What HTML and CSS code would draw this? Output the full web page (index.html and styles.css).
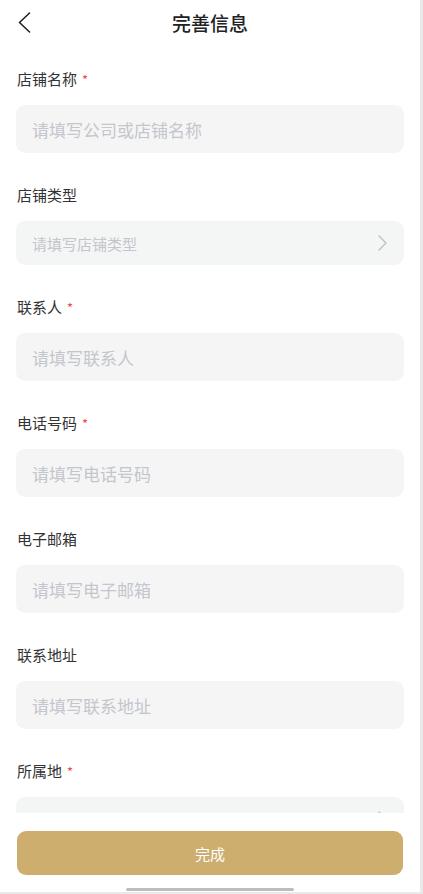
FILE: index.html
```html
<!DOCTYPE html>
<html lang="zh-CN">
<head>
  <meta charset="UTF-8">
  <title>完善信息</title>
  <link rel="stylesheet" href="styles.css">
</head>
<body>
  <div class="page">
    <div class="header">
      <a class="back" href="#">
        <svg width="13" height="21" viewBox="0 0 13 21"><polyline points="11.5,1 1.5,10.5 11.5,20" fill="none" stroke="#222" stroke-width="1.6" stroke-linecap="round" stroke-linejoin="round"/></svg>
      </a>
      <h1>完善信息</h1>
    </div>

    <div class="content">
      <div class="field">
        <div class="label">店铺名称<span class="req">*</span></div>
        <input class="input" type="text" placeholder="请填写公司或店铺名称">
      </div>
      <div class="field">
        <div class="label">店铺类型</div>
        <div class="select">
          <span>请填写店铺类型</span>
          <svg width="9" height="16" viewBox="0 0 9 16"><polyline points="1,1 8,8 1,15" fill="none" stroke="#bdbdbd" stroke-width="1.2" stroke-linecap="round" stroke-linejoin="round"/></svg>
        </div>
      </div>
      <div class="field">
        <div class="label">联系人<span class="req">*</span></div>
        <input class="input" type="text" placeholder="请填写联系人">
      </div>
      <div class="field">
        <div class="label">电话号码<span class="req">*</span></div>
        <input class="input" type="text" placeholder="请填写电话号码">
      </div>
      <div class="field">
        <div class="label">电子邮箱</div>
        <input class="input" type="text" placeholder="请填写电子邮箱">
      </div>
      <div class="field">
        <div class="label">联系地址</div>
        <input class="input" type="text" placeholder="请填写联系地址">
      </div>
      <div class="field">
        <div class="label">所属地<span class="req">*</span></div>
        <div class="select">
          <span>请选择所属地</span>
          <svg width="9" height="16" viewBox="0 0 9 16"><polyline points="1,1 8,8 1,15" fill="none" stroke="#bdbdbd" stroke-width="1.2" stroke-linecap="round" stroke-linejoin="round"/></svg>
        </div>
      </div>
    </div>

    <div class="footer">
      <button class="submit">完成</button>
      <div class="home-bar"></div>
    </div>
  </div>
</body>
</html>
```

FILE: styles.css
```css
body {
  margin: 0;
  background-color: #e9e9e9;
  font-family: "Noto Sans CJK SC", "Noto Sans", sans-serif;
}

.page {
  width: 420px;
  height: 892px;
  background: white;
  display: flex;
  flex-direction: column;
  overflow: hidden;
}

.header {
  height: 44px;
  flex-shrink: 0;
  display: flex;
  align-items: center;
  justify-content: center;
  position: relative;
}

.header h1 {
  margin: 0;
  font-size: 19px;
  font-weight: 500;
  color: #222;
}

.back {
  position: absolute;
  left: 18px;
  top: 12px;
  display: block;
  line-height: 0;
}

.content {
  flex: 1;
  overflow: hidden;
  padding: 24px 16px 0 16px;
}

.field {
  margin-bottom: 31px;
}

.label {
  height: 22px;
  line-height: 22px;
  font-size: 15px;
  color: #333;
  margin-bottom: 15px;
  padding-left: 1px;
}

.req {
  color: #f04848;
  font-size: 13px;
  margin-left: 5px;
}

.input {
  display: block;
  box-sizing: border-box;
  width: 100%;
  height: 48px;
  border: none;
  outline: none;
  border-radius: 9px;
  background-color: #f5f5f5;
  padding: 0 16px;
  font-family: inherit;
  font-size: 17px;
  color: #333;
}

.input::placeholder {
  color: #c3c6cc;
}

.select {
  box-sizing: border-box;
  height: 44px;
  border-radius: 9px;
  background-color: #f4f5f5;
  padding: 0 17px 0 16px;
  display: flex;
  align-items: center;
  justify-content: space-between;
  font-size: 15px;
  color: #c3c6cc;
}

.footer {
  flex-shrink: 0;
  height: 79px;
  background: white;
  padding: 18px 17px 0 17px;
  box-sizing: border-box;
  display: flex;
  flex-direction: column;
  align-items: center;
}

.submit {
  width: 100%;
  height: 44px;
  border: none;
  border-radius: 9px;
  background-color: #cdae6e;
  color: white;
  font-family: inherit;
  font-size: 15px;
}

.home-bar {
  margin-top: 13px;
  width: 168px;
  height: 3px;
  border-radius: 2px;
  background-color: #bdbdbd;
}
```
